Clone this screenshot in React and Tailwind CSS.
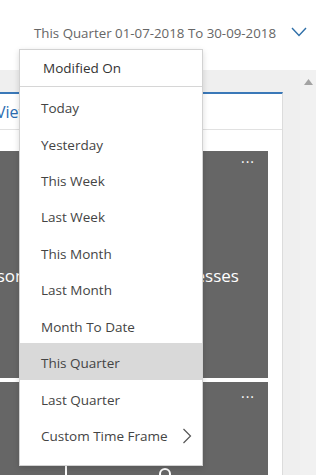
import React from "react";

const items = [
  "Today",
  "Yesterday",
  "This Week",
  "Last Week",
  "This Month",
  "Last Month",
  "Month To Date",
  "This Quarter",
  "Last Quarter",
  "Custom Time Frame",
];

export default function App() {
  const font = { fontFamily: '"Open Sans", "Noto Sans", sans-serif' };
  return (
    <div
      className="relative w-[316px] h-[475px] overflow-hidden bg-white flex flex-col"
      style={font}
    >
      {/* top bar */}
      <div className="h-[70px] shrink-0 flex items-start bg-white">
        <div className="pl-[34px] pt-[23px] text-[13.3px] leading-[20px] text-[#666] whitespace-nowrap">
          This Quarter 01-07-2018 To 30-09-2018
        </div>
        <svg
          className="ml-auto mr-[9px] mt-[27px]"
          width="16"
          height="10"
          viewBox="0 0 16 10"
          fill="none"
        >
          <path d="M1 1 L8 8.5 L15 1" stroke="#2f6fa8" strokeWidth="1.4" />
        </svg>
      </div>

      {/* body */}
      <div className="flex-1 bg-[#efefef] flex">
        <div className="w-[283px] mt-[22px] flex flex-col bg-white border-t-2 border-[#3a78b8] border-r border-r-[#dcdcdc]">
          <div className="h-[36px] shrink-0 border-b border-[#e1e1e1] flex items-center">
            <span className="ml-[-4px] text-[16px] text-[#2b6cb0] whitespace-nowrap">
              View All
            </span>
          </div>
          <div className="pt-[21px] pr-[14px] flex flex-col gap-[4px]">
            <div className="relative h-[227px] bg-[#666666]">
              <span className="absolute right-[13px] top-[4px] text-white text-[14px] leading-[14px] tracking-[1px]">
                ···
              </span>
              <span className="absolute left-[-30px] top-[112px] text-white text-[17px] whitespace-nowrap">
                Persons
              </span>
              <span className="absolute left-[157px] top-[112px] text-white text-[17px] whitespace-nowrap">
                Addresses
              </span>
            </div>
            <div className="relative h-[120px] bg-[#666666]">
              <span className="absolute right-[13px] top-[8px] text-white text-[14px] leading-[14px] tracking-[1px]">
                ···
              </span>
              <div className="absolute left-[65px] top-[84px] w-[2px] h-[40px] bg-white" />
              <div className="absolute left-[159px] top-[86px] w-[12px] h-[12px] rounded-full border-2 border-white" />
            </div>
          </div>
        </div>
        <div className="flex-1" />
        <div className="w-[16px] flex justify-center pt-[9px] bg-[#f1f1f1]">
          <svg width="9" height="6" viewBox="0 0 9 6">
            <path d="M0 6 L4.5 0 L9 6 Z" fill="#a3a3a3" />
          </svg>
        </div>
      </div>

      {/* dropdown */}
      <div className="absolute left-[19px] top-[49px] w-[184px] h-[417px] bg-white border border-[#d2d2d2] shadow-[0_2px_6px_rgba(0,0,0,0.15)] flex flex-col">
        <div className="h-[37px] shrink-0 border-b border-[#d6d6d6] flex items-center pl-[23px] text-[13.5px] text-[#333]">
          Modified On
        </div>
        <div className="pt-[1px] flex flex-col">
          {items.map((it) => (
            <div
              key={it}
              className={
                "h-[36.45px] flex items-center pl-[21px] pr-[10px] pt-[4px] text-[13.5px] text-[#444] " +
                (it === "This Quarter" ? "bg-[#d9d9d9]" : "")
              }
            >
              <span className="whitespace-nowrap">{it}</span>
              {it === "Custom Time Frame" && (
                <svg
                  className="ml-auto"
                  width="10"
                  height="16"
                  viewBox="0 0 10 16"
                  fill="none"
                >
                  <path d="M1.5 1 L8.5 8 L1.5 15" stroke="#555" strokeWidth="1.2" />
                </svg>
              )}
            </div>
          ))}
        </div>
      </div>
    </div>
  );
}
